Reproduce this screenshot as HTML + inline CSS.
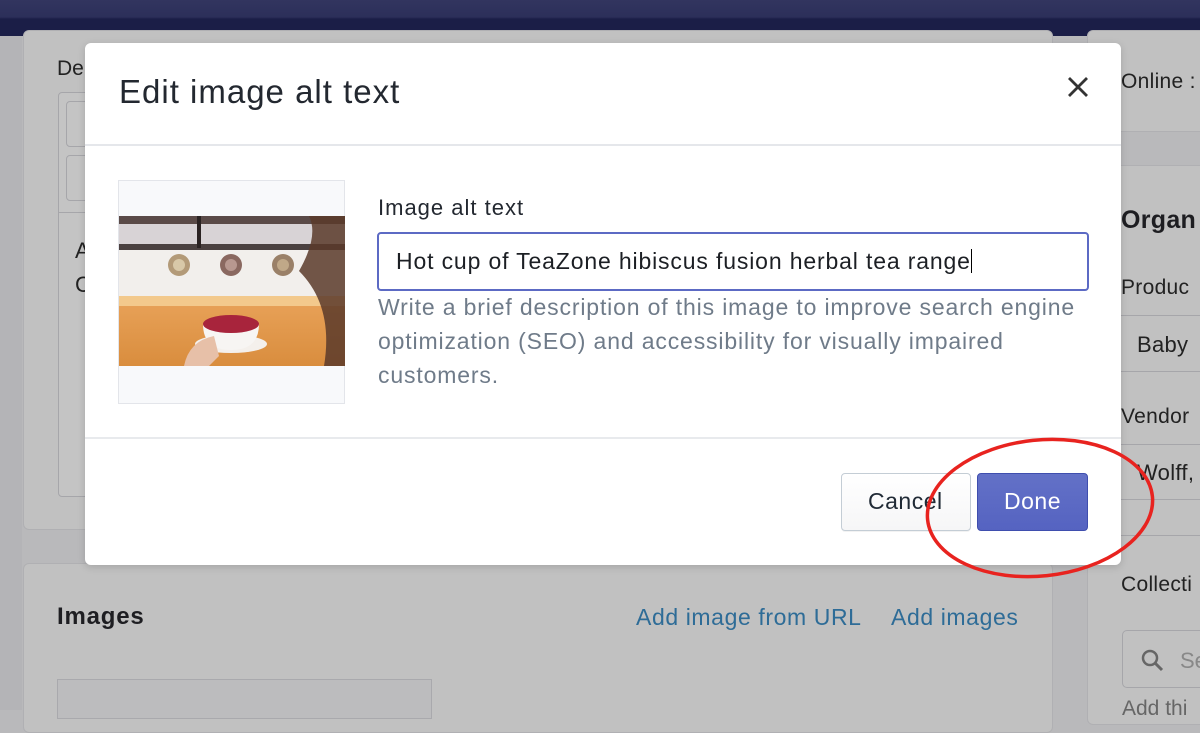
<!DOCTYPE html>
<html><head><meta charset="utf-8"><style>
*{margin:0;padding:0;box-sizing:border-box}
body{width:1200px;height:710px;overflow:hidden;background:#b9b9bb;font-family:"Liberation Sans",sans-serif;position:relative;color:#212b36}
.abs{position:absolute}
.top{left:0;top:0;width:1200px;height:36px;background:linear-gradient(#32355f 0,#2c2f5a 17px,#1b1e47 19px,#1b1e47 36px)}
.card{background:#c1c1c1;border:1px solid #b0b0b3;border-radius:6px}
.modal{left:85px;top:43px;width:1036px;height:522px;background:#fff;border-radius:6px;box-shadow:0 2px 8px rgba(0,0,0,.15)}
.t{white-space:nowrap}
</style></head><body>
<div class="abs top"></div>
<div class="abs" style="left:0;top:36px;width:22px;height:674px;background:#b4b4b7"></div>
<div class="abs card" style="left:23px;top:30px;width:1030px;height:500px"></div>
<div class="abs t" style="left:57px;top:57px;font-size:21px;color:#222">De</div>
<div class="abs" style="left:58px;top:92px;width:40px;height:405px;border:1px solid #a6a6aa;border-radius:4px;background:#c4c4c4"></div>
<div class="abs" style="left:66px;top:101px;width:30px;height:46px;border:1px solid #a6a6aa;border-radius:4px"></div>
<div class="abs" style="left:66px;top:155px;width:30px;height:46px;border:1px solid #a6a6aa;border-radius:4px"></div>
<div class="abs" style="left:58px;top:212px;width:30px;height:1px;background:#a6a6aa"></div>
<div class="abs t" style="left:75px;top:238px;font-size:22px;color:#222">A</div>
<div class="abs t" style="left:75px;top:272px;font-size:22px;color:#222">C</div>
<div class="abs card" style="left:23px;top:563px;width:1030px;height:170px"></div>
<div class="abs t" style="left:57px;top:603px;font-size:24px;font-weight:bold;color:#1e1e22;letter-spacing:0.8px">Images</div>
<div class="abs t" style="left:636px;top:604px;font-size:23px;color:#2e6c97;letter-spacing:0.6px">Add image from URL</div>
<div class="abs t" style="left:891px;top:604px;font-size:23px;color:#2e6c97;letter-spacing:0.6px">Add images</div>
<div class="abs" style="left:57px;top:679px;width:375px;height:40px;border:1px solid #a9a9ad;background:#bcbcbe"></div>
<div class="abs card" style="left:1087px;top:30px;width:140px;height:102px"></div>
<div class="abs t" style="left:1121px;top:70px;font-size:21px;color:#222;letter-spacing:0.3px">Online :</div>
<div class="abs card" style="left:1087px;top:165px;width:140px;height:560px"></div>
<div class="abs t" style="left:1121px;top:206px;font-size:25px;font-weight:bold;color:#1e1e22;letter-spacing:0.3px">Organ</div>
<div class="abs t" style="left:1121px;top:276px;font-size:21px;color:#222;letter-spacing:0.3px">Produc</div>
<div class="abs" style="left:1121px;top:315px;width:90px;height:57px;border-top:1px solid #a6a6aa;border-bottom:1px solid #a6a6aa"></div>
<div class="abs t" style="left:1137px;top:332px;font-size:22px;color:#222;letter-spacing:0.3px">Baby</div>
<div class="abs t" style="left:1121px;top:405px;font-size:21px;color:#222;letter-spacing:0.3px">Vendor</div>
<div class="abs" style="left:1121px;top:444px;width:90px;height:56px;border-top:1px solid #a6a6aa;border-bottom:1px solid #a6a6aa"></div>
<div class="abs t" style="left:1137px;top:460px;font-size:22px;color:#222;letter-spacing:0.3px">Wolff,</div>
<div class="abs" style="left:1087px;top:535px;width:120px;height:1px;background:#a6a6aa"></div>
<div class="abs t" style="left:1121px;top:573px;font-size:21px;color:#222;letter-spacing:0.3px">Collecti</div>
<div class="abs" style="left:1122px;top:630px;width:100px;height:58px;border:1px solid #a6a6aa;border-radius:5px"></div>
<svg class="abs" style="left:1140px;top:648px" width="26" height="26" viewBox="0 0 26 26"><circle cx="10" cy="10" r="7" fill="none" stroke="#666" stroke-width="2.5"/><path d="M15 15l7 7" stroke="#666" stroke-width="3"/></svg>
<div class="abs t" style="left:1180px;top:648px;font-size:22px;color:#888">Se</div>
<div class="abs t" style="left:1122px;top:697px;font-size:21px;color:#666">Add thi</div>
<div class="abs modal"></div>
<div class="abs t" style="left:119px;top:73px;font-size:33px;color:#232830;letter-spacing:1px">Edit image alt text</div>
<svg class="abs" style="left:1066px;top:75px" width="24" height="24" viewBox="0 0 24 24"><path d="M3 3L21 21M21 3L3 21" stroke="#333" stroke-width="2.8"/></svg>
<div class="abs" style="left:85px;top:144px;width:1036px;height:2px;background:#e5e7eb"></div>
<div class="abs" style="left:118px;top:180px;width:227px;height:224px;border:1px solid #e3e5ea;background:#f8f9fb"></div>
<svg class="abs" style="left:119px;top:216px" width="226" height="150" viewBox="0 0 226 150">
<defs><linearGradient id="tb" x1="0" y1="0" x2="0" y2="1"><stop offset="0" stop-color="#e9a35a"/><stop offset="1" stop-color="#d98d3e"/></linearGradient></defs>
<rect width="226" height="150" fill="#f2efec"/>
<rect width="226" height="30" fill="#d8d3d6"/>
<rect x="0" y="0" width="226" height="8" fill="#5a4a48"/>
<rect x="0" y="28" width="226" height="6" fill="#4a4040"/>
<rect x="78" y="0" width="4" height="32" fill="#2a2222"/>
<rect x="0" y="80" width="226" height="70" fill="url(#tb)"/>
<rect x="0" y="80" width="226" height="10" fill="#f3c98c"/>
<circle cx="60" cy="49" r="11" fill="#b39a78"/><circle cx="60" cy="49" r="6" fill="#d8c8a8"/>
<circle cx="112" cy="49" r="11" fill="#8a6860"/><circle cx="112" cy="49" r="6" fill="#b89890"/>
<circle cx="164" cy="49" r="11" fill="#9a8068"/><circle cx="164" cy="49" r="6" fill="#c0a888"/>
<path d="M190 0 L226 0 L226 150 L205 150 Q215 90 180 55 Q200 20 190 0Z" fill="#5a3a2a" opacity=".85"/>
<ellipse cx="112" cy="128" rx="36" ry="9" fill="#f4f0ec"/>
<path d="M84 108 Q84 134 112 134 Q140 134 140 108Z" fill="#f7f5f3"/>
<ellipse cx="112" cy="108" rx="28" ry="9" fill="#a8243c"/>
<path d="M65 150 Q70 125 95 120 L100 140 L90 150Z" fill="#e7c0a8"/>
</svg>
<div class="abs t" style="left:378px;top:195px;font-size:22px;color:#232830;letter-spacing:1px">Image alt text</div>
<div class="abs" style="left:377px;top:232px;width:712px;height:59px;border:2px solid #5c6ac4;border-radius:4px;background:#fff"></div>
<div class="abs t" style="left:396px;top:248px;font-size:23px;color:#1c1f24;letter-spacing:0.85px">Hot cup of TeaZone hibiscus fusion herbal tea range<span style="display:inline-block;width:1px;height:24px;background:#000;vertical-align:-4px"></span></div>
<div class="abs" style="left:378px;top:290px;width:715px;font-size:23px;line-height:34px;color:#6f7b89;letter-spacing:0.85px">Write a brief description of this image to improve search engine optimization (SEO) and accessibility for visually impaired customers.</div>
<div class="abs" style="left:85px;top:437px;width:1036px;height:2px;background:#e8eaed"></div>
<div class="abs" style="left:841px;top:473px;width:130px;height:58px;border:1px solid #c4cdd5;border-radius:4px;background:linear-gradient(#fff,#f6f6f7);box-shadow:0 1px 0 rgba(0,0,0,.05)"></div>
<div class="abs t" style="left:868px;top:488px;font-size:23px;color:#212b36;letter-spacing:0.5px">Cancel</div>
<div class="abs" style="left:977px;top:473px;width:111px;height:58px;border:1px solid #3f4eae;border-radius:4px;background:linear-gradient(#6371c7,#5563c1)"></div>
<div class="abs t" style="left:1004px;top:488px;font-size:23px;color:#fff;letter-spacing:0.5px">Done</div>
<svg class="abs" style="left:915px;top:430px" width="250" height="160" viewBox="0 0 250 160"><ellipse cx="125" cy="78" rx="113" ry="68" transform="rotate(-6 125 78)" fill="none" stroke="#e8231f" stroke-width="3.5"/></svg>
</body></html>
